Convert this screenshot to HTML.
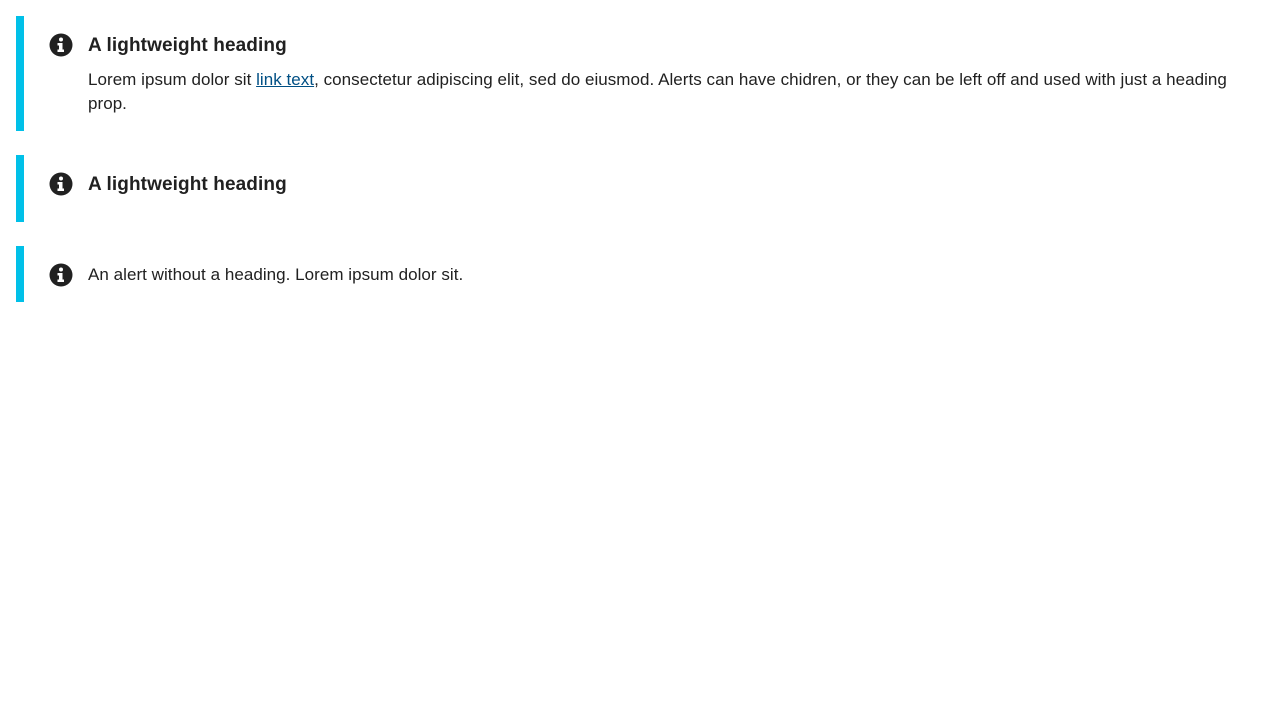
<!DOCTYPE html>
<html><head><style>
body{margin:0;background:#fff;font-family:"Liberation Sans",sans-serif;color:#212121;}
.a{position:absolute;left:16px;border-left:8px solid #00c0e8;width:1240px;box-sizing:border-box;}
.ic{position:absolute;left:25px;}
.h{position:absolute;left:64px;font-weight:bold;font-size:19px;white-space:nowrap;letter-spacing:0.1px;}
.t{position:absolute;left:64px;font-size:17px;line-height:24px;width:1160px;letter-spacing:0.04px;}
a{color:#004f84;}
</style></head><body>
<div class="a" style="top:16px;height:115px">
<svg class="ic" style="top:17px" width="24" height="24" viewBox="0 0 24 24"><circle cx="12" cy="12" r="11.5" fill="#212121"/><circle cx="12" cy="6.5" r="2" fill="#fff"/><path d="M8.5 10h5v6.5h1.5v2.5h-6.5v-2.5h1.5v-4h-1.5z" fill="#fff"/></svg>
<div class="h" style="top:19px">A lightweight heading</div>
<div class="t" style="top:52px">Lorem ipsum dolor sit <a href="#">link text</a>, consectetur adipiscing elit, sed do eiusmod. Alerts can have chidren, or they can be left off and used with just a heading prop.</div>
</div>
<div class="a" style="top:155px;height:67px">
<svg class="ic" style="top:17px" width="24" height="24" viewBox="0 0 24 24"><circle cx="12" cy="12" r="11.5" fill="#212121"/><circle cx="12" cy="6.5" r="2" fill="#fff"/><path d="M8.5 10h5v6.5h1.5v2.5h-6.5v-2.5h1.5v-4h-1.5z" fill="#fff"/></svg>
<div class="h" style="top:19px">A lightweight heading</div>
</div>
<div class="a" style="top:246px;height:56px">
<svg class="ic" style="top:17px" width="24" height="24" viewBox="0 0 24 24"><circle cx="12" cy="12" r="11.5" fill="#212121"/><circle cx="12" cy="6.5" r="2" fill="#fff"/><path d="M8.5 10h5v6.5h1.5v2.5h-6.5v-2.5h1.5v-4h-1.5z" fill="#fff"/></svg>
<div class="t" style="top:17px">An alert without a heading. Lorem ipsum dolor sit.</div>
</div>
</body></html>
